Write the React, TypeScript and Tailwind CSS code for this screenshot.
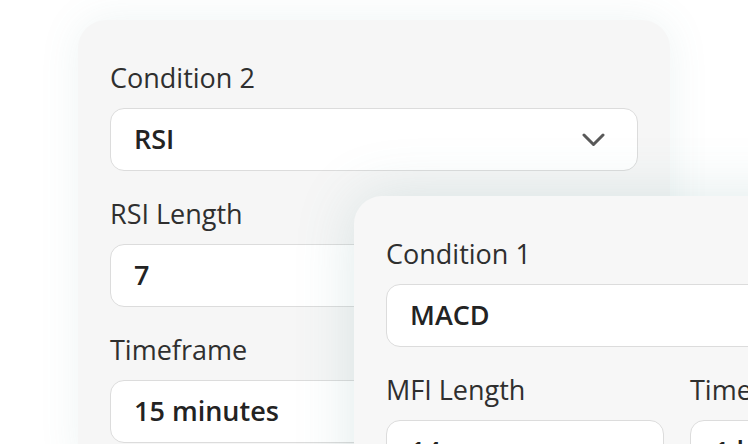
import React from 'react';

const font = { fontFamily: '"Open Sans", "Noto Sans", sans-serif' };

const Chevron: React.FC = () => (
  <svg width="23" height="14" viewBox="0 0 23 14" fill="none">
    <polyline points="2,2 11.5,11.5 21,2" stroke="#595959" strokeWidth="3" strokeLinecap="round" strokeLinejoin="round" />
  </svg>
);

const Field: React.FC<{ label: string; value: string; select?: boolean }> = ({ label, value, select }) => (
  <div className="flex flex-col">
    <label className="text-[27px] leading-[38px] text-[#2f2f2f] mb-[11px] whitespace-nowrap">{label}</label>
    <div className="h-[63px] bg-white border-[1.5px] border-[#dcdcdc] rounded-[14px] pl-[23px] pr-[32px] flex items-center justify-between">
      <span className="text-[27px] font-semibold text-[#232323] whitespace-nowrap">{value}</span>
      {select && <Chevron />}
    </div>
  </div>
);

export default function App() {
  return (
    <div className="relative w-[748px] h-[444px] overflow-hidden bg-white" style={font}>
      {/* back card */}
      <div className="ml-[78px] mt-[20px] w-[592px] bg-[#f6f6f6] rounded-[28px] px-[32px] pt-[39px] pb-[32px] flex flex-col gap-[24px] shadow-[0_0_40px_rgba(90,150,150,0.10)]">
        <Field label="Condition 2" value="RSI" select />
        <Field label="RSI Length" value="7" />
        <Field label="Timeframe" value="15 minutes" />
      </div>

      {/* front card, overlapping */}
      <div className="absolute left-[354px] top-[196px] w-[646px] bg-[#f7f7f7] rounded-[28px] px-[32px] pt-[39px] pb-[32px] flex flex-col gap-[24px] shadow-[0_0_60px_rgba(80,140,140,0.18)]">
        <Field label="Condition 1" value="MACD" select />
        <div className="grid grid-cols-2 gap-[26px]">
          <Field label="MFI Length" value="14" />
          <Field label="Timeframe" value="1 hour" />
        </div>
      </div>
    </div>
  );
}
